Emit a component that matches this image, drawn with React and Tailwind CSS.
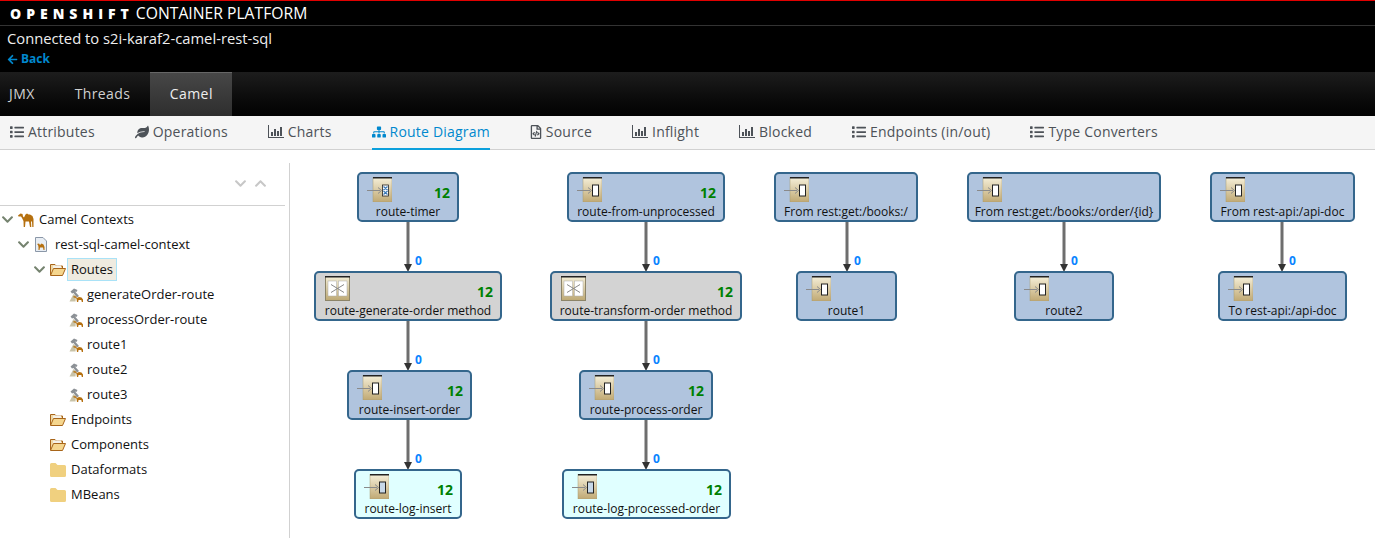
import { FaArrowLeft, FaChevronDown, FaChevronUp, FaLeaf, FaList, FaRegFileCode, FaSitemap } from "react-icons/fa";

const navItems = [
  { label: "Attributes", icon: "list" },
  { label: "Operations", icon: "leaf" },
  { label: "Charts", icon: "chart" },
  { label: "Route Diagram", icon: "sitemap", active: true },
  { label: "Source", icon: "file" },
  { label: "Inflight", icon: "chart" },
  { label: "Blocked", icon: "chart" },
  { label: "Endpoints (in/out)", icon: "list" },
  { label: "Type Converters", icon: "list" },
];

const treeRows = [
  { label: "Camel Contexts", depth: 0, icon: "camel", open: true },
  { label: "rest-sql-camel-context", depth: 1, icon: "file", open: true },
  { label: "Routes", depth: 2, icon: "open", open: true, selected: true },
  { label: "generateOrder-route", depth: 3, icon: "route" },
  { label: "processOrder-route", depth: 3, icon: "route" },
  { label: "route1", depth: 3, icon: "route" },
  { label: "route2", depth: 3, icon: "route" },
  { label: "route3", depth: 3, icon: "route" },
  { label: "Endpoints", depth: 2, icon: "open" },
  { label: "Components", depth: 2, icon: "open" },
  { label: "Dataformats", depth: 2, icon: "folder" },
  { label: "MBeans", depth: 2, icon: "folder" },
];

// coordinates are relative to the diagram canvas, which starts at x=290 y=150
const nodes = [
  { label: "route-timer", x: 67, y: 22, w: 102, kind: "timer", tone: "blue", count: 12 },
  { label: "route-generate-order method", x: 24, y: 121, w: 188, kind: "method", tone: "gray", count: 12 },
  { label: "route-insert-order", x: 57, y: 220, w: 125, kind: "endpoint", tone: "blue", count: 12 },
  { label: "route-log-insert", x: 64, y: 319, w: 108, kind: "log", tone: "cyan", count: 12 },
  { label: "route-from-unprocessed", x: 277, y: 22, w: 158, kind: "endpoint", tone: "blue", count: 12 },
  { label: "route-transform-order method", x: 260, y: 121, w: 192, kind: "method", tone: "gray", count: 12 },
  { label: "route-process-order", x: 289, y: 220, w: 134, kind: "endpoint", tone: "blue", count: 12 },
  { label: "route-log-processed-order", x: 272, y: 319, w: 169, kind: "log", tone: "cyan", count: 12 },
  { label: "From rest:get:/books:/", x: 484, y: 22, w: 144, kind: "endpoint", tone: "blue" },
  { label: "route1", x: 506, y: 121, w: 101, kind: "endpoint", tone: "blue" },
  { label: "From rest:get:/books:/order/{id}", x: 677, y: 22, w: 194, kind: "endpoint", tone: "blue" },
  { label: "route2", x: 724, y: 121, w: 100, kind: "endpoint", tone: "blue" },
  { label: "From rest-api:/api-doc", x: 920, y: 22, w: 145, kind: "endpoint", tone: "blue" },
  { label: "To rest-api:/api-doc", x: 928, y: 121, w: 129, kind: "endpoint", tone: "blue" },
];

const edges = [
  [118, 72], [118, 171], [118, 270],
  [356, 72], [356, 171], [356, 270],
  [557, 72], [774, 72], [992, 72],
];

const tones = {
  blue: "bg-[#b0c4de]",
  gray: "bg-[#d3d3d3]",
  cyan: "bg-[#e0ffff]",
};

function BarChartIcon() {
  return (
    <svg width="16" height="13" viewBox="0 0 16 13" fill="currentColor">
      <rect x="0" y="0" width="1" height="13" />
      <rect x="0" y="12" width="16" height="1" />
      <rect x="3" y="7" width="2" height="4" />
      <rect x="6" y="4" width="2" height="7" />
      <rect x="9" y="6" width="2" height="5" />
      <rect x="12" y="2" width="2" height="9" />
    </svg>
  );
}

function NavIcon({ name }) {
  if (name === "list") return <FaList size={14} />;
  if (name === "leaf") return <FaLeaf size={14} />;
  if (name === "sitemap") return <FaSitemap size={14} />;
  if (name === "file") return <FaRegFileCode size={14} className="w-[12px]" />;
  return <BarChartIcon />;
}

function CamelIcon() {
  return (
    <svg width="16" height="14" viewBox="0 0 16 14" fill="#b5700f">
      <path d="M0 2.5 L2.5 0.5 L4.5 1 L5 3.5 L6 4.5 L7.5 1.5 L9 0.5 L10.5 1.5 L12 1.5 L14.5 3 L15.5 6 L15.5 14 L14.3 14 L14 8.5 L13 8.5 L13.3 14 L12 14 L11 8.5 L7.5 8.5 L7 14 L5.7 14 L5.5 8 L4 5 L3 3.5 L0.5 3.5 Z" />
    </svg>
  );
}

function FileCamelIcon() {
  return (
    <svg width="12" height="15" viewBox="0 0 12 15">
      <path d="M0.5 0.5 H8 L11.5 4 V14.5 H0.5 Z" fill="#e8edf3" stroke="#8a97a8" />
      <path d="M2 7 L4 6.5 L5 8 L6.5 6.5 L8.5 7.5 L9.5 10 V13 H8.5 L8 10.5 H5 L4.5 13 H3.5 V10 L3 8 Z" fill="#b5700f" />
    </svg>
  );
}

function OpenFolderIcon() {
  return (
    <svg width="16" height="13" viewBox="0 0 16 13">
      <path d="M0.5 12 V1.5 H5 L6.5 3 H12.5 V5" fill="#f0d9a5" stroke="#a8651a" />
      <rect x="3" y="2.5" width="8" height="3" fill="#f4f1e8" />
      <path d="M0.5 12.5 L3.5 5.5 H15.5 L12.5 12.5 Z" fill="#f5d68e" stroke="#a8651a" />
    </svg>
  );
}

function FolderIcon() {
  return (
    <svg width="16" height="14" viewBox="0 0 16 14">
      <path d="M0 1.5 Q0 0 1.5 0 H5.5 L7.5 2 H14.5 Q16 2 16 3.5 V12.5 Q16 14 14.5 14 H1.5 Q0 14 0 12.5 Z" fill="#f0d07f" />
    </svg>
  );
}

function RouteIcon() {
  return (
    <svg width="14" height="14" viewBox="0 0 14 14">
      <path d="M0.5 13.5 L4.5 6 L7 8 L6.5 13.5 Z" fill="#c9c3a8" />
      <path d="M1.5 3.5 L5 0.5 L8.5 2 L7.5 4 L6 3.5 L10 8 L8 9.5 L4.5 5 L3 5.5 Z" fill="#8c9196" />
      <path d="M4.5 8 L7 8.5 L8 10 L10 9 L12.5 9.5 L14 11.5 V14 H12.8 L12.3 12 H9.5 L9.2 14 H8 L7.5 10.8 L6.5 9.8 L4.5 9.5 Z" fill="#b5700f" />
    </svg>
  );
}

function TreeIcon({ name }) {
  if (name === "camel") return <CamelIcon />;
  if (name === "file") return <FileCamelIcon />;
  if (name === "open") return <OpenFolderIcon />;
  if (name === "folder") return <FolderIcon />;
  return <RouteIcon />;
}

function TreeRow({ row }) {
  const caretLeft = ["pl-[1px]", "pl-[17px]", "pl-[33px]", "pl-[49px]"][row.depth];
  const iconBox = row.icon === "file" ? "w-[16px] pl-[1px]" : row.icon === "route" ? "w-[20px] pl-[3px]" : "w-[16px]";
  return (
    <div className={`flex h-[25px] items-center ${caretLeft}`}>
      <span className="flex w-[17px] shrink-0 items-center text-[#75836f]">
        {row.open && <FaChevronDown size={13} />}
      </span>
      <span className={`flex shrink-0 items-center ${iconBox}`}>
        <TreeIcon name={row.icon} />
      </span>
      {row.selected ? (
        <span className="ml-[1px] flex h-[23px] items-center border border-[#a9e2f7] bg-[#efebe0] px-[3px] text-[#111]">
          {row.label}
        </span>
      ) : (
        <span className={row.depth === 3 ? "ml-[1px]" : "ml-[5px] text-[#111]"}>{row.label}</span>
      )}
    </div>
  );
}

function Tree() {
  return (
    <aside className="mt-[13px] h-[375px] w-[290px] shrink-0 border-r border-[#d1d1d1] pr-[4px] text-[13px] text-[#111]">
      <div className="flex h-[43px] items-center justify-end gap-[7px] border-b border-[#d1d1d1] pb-[1px] pr-[18px] text-[#c7c7c7]">
        <FaChevronDown size={13} />
        <FaChevronUp size={13} />
      </div>
      <div className="pt-[1px]">
        {treeRows.map((row) => (
          <TreeRow key={row.label} row={row} />
        ))}
      </div>
    </aside>
  );
}

function NodeIcon({ kind }) {
  if (kind === "method") {
    return (
      <svg width="25" height="25" viewBox="0 0 25 25">
        <defs>
          <linearGradient id="methodBg" x1="0" y1="0" x2="0" y2="1">
            <stop offset="0" stopColor="#f4eed6" />
            <stop offset="1" stopColor="#bda873" />
          </linearGradient>
        </defs>
        <rect x="0.5" y="0.5" width="24" height="24" fill="url(#methodBg)" stroke="#8c8468" />
        <rect x="0" y="0" width="25" height="1.5" fill="#222" />
        <rect x="3" y="5" width="8.5" height="15" fill="#fff" stroke="#aaa" strokeWidth="0.5" />
        <rect x="13.5" y="5" width="8.5" height="15" fill="#fff" stroke="#aaa" strokeWidth="0.5" />
        <path d="M6 8.5 L19 16.5 M19 8.5 L6 16.5" stroke="#888" strokeWidth="1" />
      </svg>
    );
  }
  return (
    <svg width="25" height="25" viewBox="0 0 25 25">
      <defs>
        <linearGradient id={`nodeBg-${kind}`} x1="0" y1="0" x2="0" y2="1">
          <stop offset="0" stopColor="#f6f0da" />
          <stop offset="1" stopColor="#c0a974" />
        </linearGradient>
      </defs>
      <rect x="6" y="0" width="19" height="25" fill={`url(#nodeBg-${kind})`} stroke="#a89a70" strokeWidth="0.5" />
      <rect x="6" y="0" width="19" height="1.5" fill="#222" />
      <path d="M0 13.5 H13" stroke="#8a8a8a" strokeWidth="1" />
      <path d="M11 10.5 L14.5 13.5 L11 16.5" fill="none" stroke="#8a8a8a" strokeWidth="1" />
      {kind === "timer" ? (
        <>
          <rect x="15.5" y="8" width="6" height="11" fill="#fff" stroke="#222" strokeWidth="0.8" />
          <path d="M16.5 9.5 L20.5 13 M20.5 9.5 L16.5 13 M16.5 14 L20.5 17.5 M20.5 14 L16.5 17.5" stroke="#3a78b5" strokeWidth="1.2" />
        </>
      ) : (
        <rect
          x="15.5"
          y="8"
          width="6"
          height="11"
          fill={kind === "log" ? "#c7d8e8" : "#fff"}
          stroke="#222"
          strokeWidth="1"
        />
      )}
    </svg>
  );
}

function RouteNode({ node }) {
  const iconLeft = node.kind === "method" ? "left-[9px]" : "left-[8px]";
  return (
    <div
      className={`absolute flex h-[50px] items-end justify-center rounded-[5px] border-2 border-[#34668c] text-[12px] leading-[16px] text-[#111] ${tones[node.tone]}`}
      style={{ left: node.x, top: node.y, width: node.w }}
    >
      <span className={`absolute top-[3px] h-[25px] w-[25px] ${iconLeft}`}>
        <NodeIcon kind={node.kind} />
      </span>
      {node.count && (
        <span className="absolute right-[7px] top-[10px] text-[14px] font-bold leading-[18px] text-[#008000]">
          {node.count}
        </span>
      )}
      <span className="whitespace-nowrap">{node.label}</span>
    </div>
  );
}

function Edge({ x, y }) {
  return (
    <>
      <svg className="absolute" style={{ left: x - 6, top: y }} width="12" height="50" viewBox="0 0 12 50">
        <rect x="4.5" y="0" width="3" height="44" fill="#6e6e6e" />
        <path d="M2 42 H10 L6 50 Z" fill="#333" />
      </svg>
      <span
        className="absolute text-[12px] font-bold leading-[14px] text-[#0a84ff]"
        style={{ left: x + 7, top: y + 32 }}
      >
        0
      </span>
    </>
  );
}

function Diagram() {
  return (
    <div className="relative h-[388px] min-w-0 flex-1 overflow-hidden">
      {edges.map(([x, y]) => (
        <Edge key={`${x}-${y}`} x={x} y={y} />
      ))}
      {nodes.map((node) => (
        <RouteNode key={node.label} node={node} />
      ))}
    </div>
  );
}

export default function App() {
  return (
    <div className="h-[538px] w-[1375px] overflow-hidden bg-white font-['Open_Sans',sans-serif]">
      <header className="h-[72px] border-t-[1px] border-[#e00000] bg-black text-white">
        <div className="flex h-[25px] items-center border-b border-[#333] pl-[10px]">
          <span className="text-[14px] font-extrabold tracking-[5px]">OPENSHIFT</span>
          <span className="ml-[2px] text-[15.7px] font-normal leading-[20px]">CONTAINER PLATFORM</span>
        </div>
        <div className="pl-[7px] pt-[2px] text-[14.75px] leading-[20px] text-[#eee]">Connected to s2i-karaf2-camel-rest-sql</div>
        <a className="mt-[2px] flex items-center gap-[3px] pl-[7px] text-[12px] font-bold leading-[18px] text-[#0088ce]">
          <FaArrowLeft size={11} />
          Back
        </a>
      </header>

      <nav className="flex h-[44px] bg-gradient-to-b from-[#1d1d1d] to-[#030303] text-[14px] tracking-[0.4px] text-[#d1d1d1]">
        <span className="flex items-center pb-[2px] pl-[9px] pr-[20px]">JMX</span>
        <span className="flex items-center px-[20px] pb-[2px]">Threads</span>
        <span className="flex w-[82px] items-center justify-center border-t border-[#666] bg-gradient-to-b from-[#474747] to-[#2e2e2e] pb-[2px] text-[#eee]">
          Camel
        </span>
      </nav>

      <nav className="flex h-[34px] items-stretch gap-[40px] border-b border-[#d1d1d1] bg-[#f5f5f5] pl-[10px] text-[14px] tracking-[0.2px] text-[#4d5258]">
        {navItems.map((item) => (
          <span
            key={item.label}
            className={`-mb-px flex items-center gap-[4px] border-b-2 pb-[1px] ${
              item.active ? "border-[#0ca0dc] text-[#0088ce]" : "border-transparent"
            }`}
          >
            <NavIcon name={item.icon} />
            {item.label}
          </span>
        ))}
      </nav>

      <main className="flex">
        <Tree />
        <Diagram />
      </main>
    </div>
  );
}
